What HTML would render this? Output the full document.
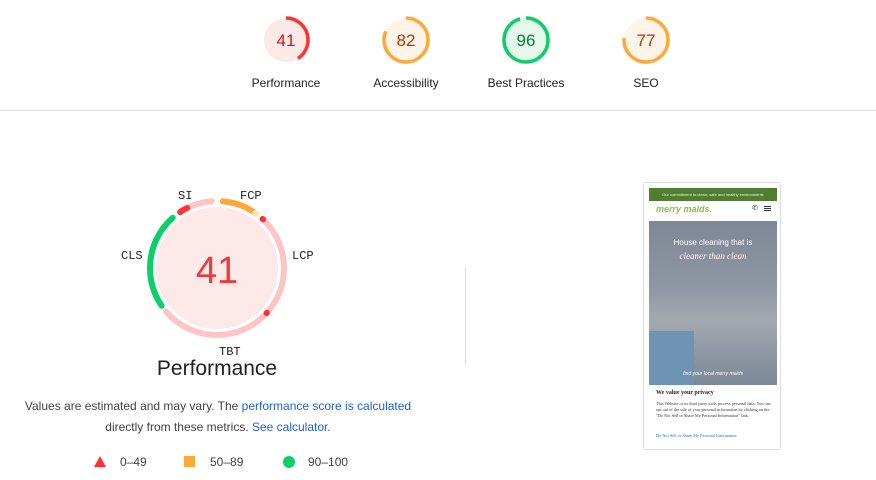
<!DOCTYPE html>
<html><head><meta charset="utf-8"><style>
body{margin:0;width:876px;height:480px;background:#fff;font-family:"Liberation Sans",Arial,sans-serif;position:relative;overflow:hidden;color:#212121}
.a{position:absolute}
.lbl{position:absolute;font-size:12px;color:#212121;text-align:center;width:120px}
.mono{position:absolute;font-family:"Liberation Mono",monospace;font-size:12px;color:#212121}
a{color:#1a5fe8;text-decoration:none}
</style></head><body>
<svg class="a" style="left:0;top:0" width="876" height="110">
 <g font-family="Liberation Sans,Arial,sans-serif" font-size="17" text-anchor="middle">
  <circle cx="286" cy="40" r="22" fill="#fde9e8"/>
  <circle cx="286" cy="40" r="22" fill="none" stroke="#ff3333" stroke-width="3.5" pathLength="360" stroke-dasharray="148 400" transform="rotate(-90 286 40)"/>
  <text x="286" y="46" fill="#c81d1d">41</text>
  <circle cx="406" cy="40" r="22" fill="#fff4e8"/>
  <circle cx="406" cy="40" r="22" fill="none" stroke="#ffa83a" stroke-width="3.5" pathLength="360" stroke-dasharray="295 400" transform="rotate(-90 406 40)"/>
  <text x="406" y="46" fill="#c33300">82</text>
  <circle cx="526" cy="40" r="22" fill="#e6f8ec"/>
  <circle cx="526" cy="40" r="22" fill="none" stroke="#0cce6b" stroke-width="3.5" pathLength="360" stroke-dasharray="346 400" transform="rotate(-90 526 40)"/>
  <text x="526" y="46" fill="#008033">96</text>
  <circle cx="646" cy="40" r="22" fill="#fff4e8"/>
  <circle cx="646" cy="40" r="22" fill="none" stroke="#ffa83a" stroke-width="3.5" pathLength="360" stroke-dasharray="277 400" transform="rotate(-90 646 40)"/>
  <text x="646" y="46" fill="#c33300">77</text>
 </g>
</svg>
<div class="lbl" style="left:226px;top:76px">Performance</div>
<div class="lbl" style="left:346px;top:76px">Accessibility</div>
<div class="lbl" style="left:466px;top:76px">Best Practices</div>
<div class="lbl" style="left:586px;top:76px">SEO</div>
<div class="a" style="left:0;top:110px;width:876px;height:1px;background:#e0e0e0"></div>

<svg class="a" style="left:0;top:0" width="470" height="400">
 <circle cx="217" cy="268" r="61" fill="#fde9e8"/>
 <g fill="none" stroke-width="6" stroke-linecap="round" transform="rotate(-90 217 268)">
  <circle cx="217" cy="268" r="67" stroke="#ffa83a" pathLength="360" stroke-dasharray="28 400" stroke-dashoffset="-5"/>
  <circle cx="217" cy="268" r="67" stroke="#ffe0b8" pathLength="360" stroke-dasharray="1 400" stroke-dashoffset="-35"/>
  <circle cx="217" cy="268" r="67" stroke="#ffc4c4" pathLength="360" stroke-dasharray="86 400" stroke-dashoffset="-43"/>
  <circle cx="217" cy="268" r="67" stroke="#ff3333" pathLength="360" stroke-dasharray="0.5 400" stroke-dashoffset="-43"/>
  <circle cx="217" cy="268" r="67" stroke="#ffc4c4" pathLength="360" stroke-dasharray="94 400" stroke-dashoffset="-136"/>
  <circle cx="217" cy="268" r="67" stroke="#ff3333" pathLength="360" stroke-dasharray="0.5 400" stroke-dashoffset="-132"/>
  <circle cx="217" cy="268" r="67" stroke="#0cce6b" pathLength="360" stroke-dasharray="83 400" stroke-dashoffset="-236"/>
  <circle cx="217" cy="268" r="67" stroke="#ffc4c4" pathLength="360" stroke-dasharray="20 400" stroke-dashoffset="-336"/>
  <circle cx="217" cy="268" r="67" stroke="#ff3333" pathLength="360" stroke-dasharray="7 400" stroke-dashoffset="-327"/>
 </g>
 <text x="217" y="283" text-anchor="middle" font-family="Liberation Sans,Arial,sans-serif" font-size="38" fill="#eb3b3b">41</text>
</svg>
<div class="mono" style="left:178px;top:189px">SI</div>
<div class="mono" style="left:240px;top:189px">FCP</div>
<div class="mono" style="left:292px;top:249px">LCP</div>
<div class="mono" style="left:121px;top:249px">CLS</div>
<div class="mono" style="left:219px;top:345px">TBT</div>
<div class="a" style="left:117px;top:357px;width:200px;text-align:center;font-size:21px;color:#212121">Performance</div>
<div class="a" style="left:0;top:396px;width:436px;text-align:center;font-size:12px;line-height:21px;color:#424242">Values are estimated and may vary. The <a>performance score is calculated</a><br>directly from these metrics. <a>See calculator</a>.</div>
<svg class="a" style="left:0;top:450px" width="380" height="25">
 <polygon points="100,6 106,17 94,17" fill="#ff3333"/>
 <rect x="184" y="6" width="11" height="11" fill="#ffa83a"/>
 <circle cx="289" cy="12" r="6" fill="#0cce6b"/>
 <g font-family="Liberation Sans,Arial,sans-serif" font-size="12" fill="#424242">
  <text x="120" y="16">0–49</text><text x="210" y="16">50–89</text><text x="308" y="16">90–100</text>
 </g>
</svg>
<div class="a" style="left:465px;top:268px;width:1px;height:97px;background:#ddd"></div>

<div class="a" style="left:643px;top:182px;width:138px;height:268px;border:1px solid #ddd;border-radius:3px;box-sizing:border-box;overflow:hidden;background:#fff">
 <div class="a" style="left:5px;top:5px;width:128px;height:13px;background:#4f7e30;color:#dfe;font-size:4px;text-align:center;line-height:13px">Our commitment to clean, safe and healthy environments</div>
 <div class="a" style="left:12px;top:21px;font-size:9px;font-weight:bold;font-style:italic;color:#8bbf45">merry maids.</div>
 <div class="a" style="left:108px;top:21px;font-size:7px;color:#333">✆</div>
 <div class="a" style="left:120px;top:23px;width:7px;height:1px;background:#333;box-shadow:0 2px #333,0 4px #333"></div>
 <div class="a" style="left:5px;top:38px;width:128px;height:164px;background:linear-gradient(180deg,#7f8896 0%,#8d96a2 40%,#a3a9b1 60%,#7a8896 100%)">
  <div class="a" style="left:0;top:17px;width:128px;text-align:center;color:#fff;font-size:8px">House cleaning that is</div>
  <div class="a" style="left:0;top:30px;width:128px;text-align:center;color:#fff;font-size:9px;font-style:italic;font-family:'Liberation Serif',serif">cleaner than clean</div>
  <div class="a" style="left:0;top:110px;width:45px;height:54px;background:#6f93b3"></div>
  <div class="a" style="left:0;top:150px;width:128px;text-align:center;color:#fff;font-size:5px;font-style:italic">find your local merry maids</div>
 </div>
 <div class="a" style="left:5px;top:202px;width:128px;height:63px;background:#fff;font-family:'Liberation Serif',serif">
  <div class="a" style="left:7px;top:5px;font-size:6px;font-weight:bold;color:#222">We value your privacy</div>
  <div class="a" style="left:7px;top:16px;width:116px;font-size:4.3px;line-height:6px;color:#333">This Website or its third party tools process personal data. You can opt out of the sale of your personal information by clicking on the "Do Not Sell or Share My Personal Information" link.</div>
  <div class="a" style="left:7px;top:48px;font-size:4.3px;color:#2a6fb8">Do Not Sell or Share My Personal Information</div>
 </div>
</div>
</body></html>
